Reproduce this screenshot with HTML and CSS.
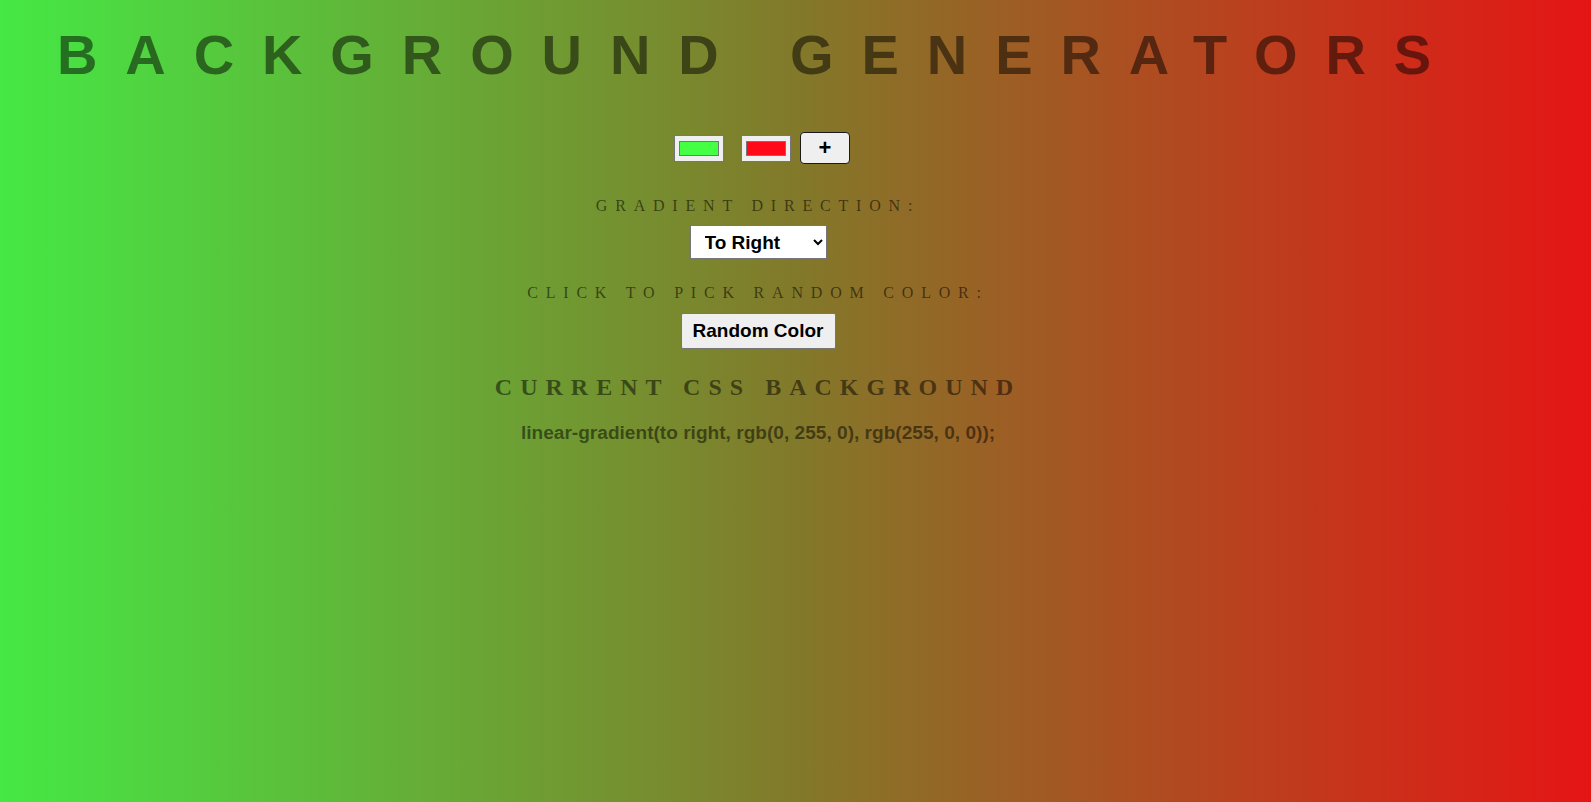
FILE: index.html
```html
<!DOCTYPE html>
<html lang="en">
<head>
<meta charset="utf-8">
<title>Background Generators</title>
<link rel="stylesheet" href="styles.css">
</head>
<body>
  <h1 class="title">BACKGROUND GENERATORS</h1>
  <main class="panel">
    <div class="swatches">
      <input class="color-input first" type="color" value="#44ff44">
      <input class="color-input second" type="color" value="#ff0817">
      <button class="add-btn" type="button">+</button>
    </div>
    <p class="label label-direction">Gradient Direction:</p>
    <select class="direction">
      <option>To Right</option>
      <option>To Left</option>
      <option>To Top</option>
      <option>To Bottom</option>
    </select>
    <p class="label label-random">Click to pick random color:</p>
    <button class="random-btn" type="button">Random Color</button>
    <h2 class="current">Current CSS Background</h2>
    <h3 class="code">linear-gradient(to right, rgb(0, 255, 0), rgb(255, 0, 0));</h3>
  </main>
</body>
</html>
```
FILE: styles.css
```css
html, body {
  height: 100%;
}

body {
  margin: 0;
  min-height: 100vh;
  background: linear-gradient(to right, #45e845 0%, #82792a 50%, #e51515 100%);
  font-family: "Liberation Sans", Arial, sans-serif;
}

.title {
  margin: 0;
  padding: 23px 0 0 57px;
  font-family: "Liberation Sans", Arial, sans-serif;
  font-weight: bold;
  font-size: 56px;
  line-height: 64px;
  letter-spacing: 27.9px;
  color: rgba(0, 0, 0, 0.5);
  white-space: nowrap;
}

.panel {
  display: flex;
  flex-direction: column;
  align-items: center;
  padding-right: 75px;
}

.swatches {
  display: flex;
  align-items: center;
  justify-content: center;
  margin-top: 45px;
  padding-left: 8px;
}

.color-input {
  width: 50px;
  height: 27px;
  margin: 0;
  padding: 1px 2px;
  border: 1px solid #767676;
  background: #efefef;
  box-sizing: border-box;
  cursor: pointer;
}

.color-input.first {
  margin-right: 17px;
}

.color-input.second {
  margin-right: 9px;
}

.add-btn {
  width: 50px;
  height: 32px;
  margin: 0;
  padding: 0;
  border: 1px solid #1a1a1a;
  border-radius: 4px;
  background: #efefef;
  color: #000;
  font-family: "Liberation Sans", Arial, sans-serif;
  font-size: 22px;
  font-weight: bold;
  line-height: 30px;
  box-sizing: border-box;
}

.label {
  margin: 0;
  font-family: "Liberation Serif", "Times New Roman", serif;
  font-size: 16px;
  line-height: 18px;
  letter-spacing: 7.8px;
  text-transform: uppercase;
  color: rgba(0, 0, 0, 0.55);
  white-space: nowrap;
}

.label-direction {
  margin-top: 33px;
}

.direction {
  margin-top: 10px;
  width: 137px;
  height: 34px;
  padding: 0 10px;
  border: 1px solid #767676;
  border-radius: 0;
  background: #fff;
  color: #000;
  font-family: "Liberation Sans", Arial, sans-serif;
  font-size: 19px;
  font-weight: bold;
  box-sizing: border-box;
}

.label-random {
  margin-top: 25px;
}

.random-btn {
  margin-top: 11px;
  width: 155px;
  height: 36px;
  padding: 0 10px;
  border: 1px solid #767676;
  border-radius: 2px;
  background: #efefef;
  color: #000;
  font-family: "Liberation Sans", Arial, sans-serif;
  font-size: 19px;
  font-weight: bold;
  box-sizing: border-box;
}

.current {
  margin: 24px 0 0 0;
  font-family: "Liberation Serif", "Times New Roman", serif;
  font-weight: bold;
  font-size: 24px;
  line-height: 28px;
  letter-spacing: 8px;
  text-transform: uppercase;
  color: rgba(0, 0, 0, 0.5);
  white-space: nowrap;
}

.code {
  margin: 21px 0 0 0;
  font-family: "Liberation Sans", Arial, sans-serif;
  font-weight: bold;
  font-size: 19.1px;
  line-height: 22px;
  color: rgba(0, 0, 0, 0.5);
  white-space: nowrap;
}
```
